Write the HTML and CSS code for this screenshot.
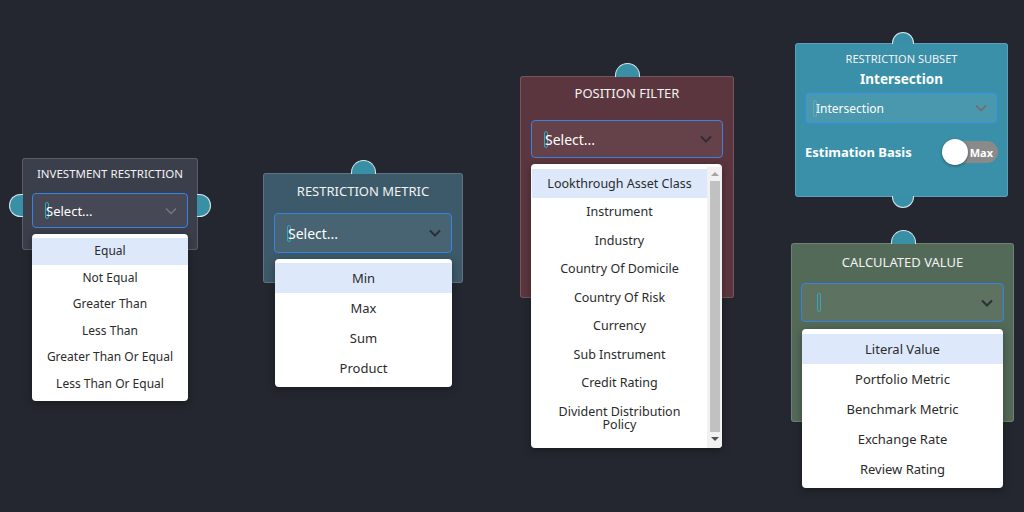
FILE: index.html
```html
<!DOCTYPE html>
<html>
  <head>
    <meta charset="UTF-8">
    <meta name="viewport" content="width=device-width, initial-scale=1.0">
    <title>Restriction builder</title>
    <link rel="stylesheet" href="styles.css">
  </head>
  <body>
    <div class="canvas">

      <!-- Investment restriction -->
      <div class="node node-investment">
        <span class="handle handle-left"></span>
        <span class="handle handle-right"></span>
        <div class="node-title">INVESTMENT RESTRICTION</div>
        <div class="select">
          <span class="caret"></span><span class="select-value">Select...</span>
          <svg class="chevron" viewBox="0 0 12 8"><path d="M1 1.5 6 6.5 11 1.5"/></svg>
          <ul class="menu">
            <li class="active">Equal</li>
            <li>Not Equal</li>
            <li>Greater Than</li>
            <li>Less Than</li>
            <li>Greater Than Or Equal</li>
            <li>Less Than Or Equal</li>
          </ul>
        </div>
      </div>

      <!-- Restriction metric -->
      <div class="node node-metric">
        <span class="handle handle-top"></span>
        <div class="node-title">RESTRICTION METRIC</div>
        <div class="select">
          <span class="caret"></span><span class="select-value">Select...</span>
          <svg class="chevron" viewBox="0 0 12 8"><path d="M1 1.5 6 6.5 11 1.5"/></svg>
          <ul class="menu">
            <li class="active">Min</li>
            <li>Max</li>
            <li>Sum</li>
            <li>Product</li>
          </ul>
        </div>
      </div>

      <!-- Position filter -->
      <div class="node node-filter">
        <span class="handle handle-top"></span>
        <div class="node-title">POSITION FILTER</div>
        <div class="select">
          <span class="caret"></span><span class="select-value">Select...</span>
          <svg class="chevron" viewBox="0 0 12 8"><path d="M1 1.5 6 6.5 11 1.5"/></svg>
          <div class="menu menu-scroll">
            <ul class="menu-list">
              <li class="active">Lookthrough Asset Class</li>
              <li>Instrument</li>
              <li>Industry</li>
              <li>Country Of Domicile</li>
              <li>Country Of Risk</li>
              <li>Currency</li>
              <li>Sub Instrument</li>
              <li>Credit Rating</li>
              <li>Divident Distribution Policy</li>
              <li>Ark Restriction</li>
            </ul>
            <div class="scrollbar">
              <span class="arrow arrow-up"></span>
              <span class="thumb"></span>
              <span class="arrow arrow-down"></span>
            </div>
          </div>
        </div>
      </div>

      <!-- Restriction subset -->
      <div class="node node-subset">
        <span class="handle handle-top"></span>
        <span class="handle handle-bottom"></span>
        <div class="node-title small">RESTRICTION SUBSET</div>
        <div class="node-subtitle">Intersection</div>
        <div class="select">
          <span class="caret faint"></span><span class="select-value">Intersection</span>
          <svg class="chevron" viewBox="0 0 12 8"><path d="M1 1.5 6 6.5 11 1.5"/></svg>
        </div>
        <div class="field-row">
          <span class="field-label">Estimation Basis</span>
          <span class="toggle"><span class="knob"></span><span class="toggle-text">Max</span></span>
        </div>
      </div>

      <!-- Calculated value -->
      <div class="node node-value">
        <span class="handle handle-top"></span>
        <div class="node-title">CALCULATED VALUE</div>
        <div class="select">
          <span class="caret"></span><span class="select-value"></span>
          <svg class="chevron" viewBox="0 0 12 8"><path d="M1 1.5 6 6.5 11 1.5"/></svg>
          <ul class="menu">
            <li class="active">Literal Value</li>
            <li>Portfolio Metric</li>
            <li>Benchmark Metric</li>
            <li>Exchange Rate</li>
            <li>Review Rating</li>
          </ul>
        </div>
      </div>

    </div>
  </body>
</html>
```

FILE: styles.css
```css
html, body {
  margin: 0;
  height: 100%;
}
body {
  background: #24272f;
  font-family: "Noto Sans", "Open Sans", sans-serif;
  color: #fff;
  overflow: hidden;
}
.canvas {
  position: relative;
  width: 1024px;
  height: 512px;
}

/* nodes sit on a free canvas */
.node {
  position: absolute;
  box-sizing: border-box;
  display: flex;
  flex-direction: column;
  border: 1px solid rgba(255, 255, 255, 0.16);
  border-radius: 3px;
}
.node-investment {
  left: 22px;
  top: 158px;
  width: 176px;
  height: 92px;
  padding: 0 9px;
  background: #3b3e4b;
}
.node-metric {
  left: 263px;
  top: 173px;
  width: 200px;
  height: 110px;
  padding: 0 10px;
  background: #3d5a6a;
}
.node-filter {
  left: 520px;
  top: 76px;
  width: 214px;
  height: 222px;
  padding: 0 10px;
  background: #5c363e;
}
.node-subset {
  left: 795px;
  top: 43px;
  width: 213px;
  height: 154px;
  padding: 0 9px;
  background: #3a90a8;
}
.node-value {
  left: 791px;
  top: 243px;
  width: 223px;
  height: 179px;
  padding: 0 9px;
  background: #546a59;
}

.node-title {
  text-align: center;
  font-size: 13px;
  line-height: 18px;
  margin: 8px 0 13px;
  color: #f2f2f2;
}
.node-investment .node-title {
  font-size: 11.5px;
  margin: 6px 0 10px;
}
.node-filter .node-title {
  margin: 7px 0 18px;
}
.node-value .node-title {
  margin: 9px 0 12px;
}
.node-title.small {
  font-size: 11px;
  line-height: 14px;
  margin: 8px 0 4px;
}
.node-subtitle {
  text-align: center;
  font-size: 13.5px;
  font-weight: bold;
  line-height: 18px;
  margin-bottom: 4px;
}

/* connection handles */
.handle {
  position: absolute;
  box-sizing: border-box;
  background: #3990a6;
  border: 1px solid #d7e6ea;
}
.handle-top {
  left: 50%;
  top: -14px;
  width: 25px;
  height: 14px;
  margin-left: -12px;
  border-bottom: none;
  border-radius: 13px 13px 0 0;
}
.node-subset .handle-top {
  top: -12px;
  width: 22px;
  height: 12px;
  margin-left: -10px;
}
.handle-bottom {
  left: 50%;
  bottom: -12px;
  width: 22px;
  height: 12px;
  margin-left: -10px;
  border-top: none;
  border-radius: 0 0 12px 12px;
}
.handle-left {
  left: -14px;
  top: 35px;
  width: 14px;
  height: 23px;
  border-right: none;
  border-radius: 12px 0 0 12px;
}
.handle-right {
  right: -14px;
  top: 35px;
  width: 14px;
  height: 23px;
  border-left: none;
  border-radius: 0 12px 12px 0;
}

/* select boxes */
.select {
  position: relative;
  box-sizing: border-box;
  display: flex;
  align-items: center;
  height: 40px;
  padding: 0 10px 0 12px;
  border: 1px solid #3584e4;
  border-radius: 4px;
  background: rgba(255, 255, 255, 0.06);
  font-size: 14px;
}
.node-investment .select {
  height: 35px;
  font-size: 13px;
}
.node-filter .select {
  height: 38px;
}
.node-value .select {
  height: 39px;
}
.node-subset .select {
  height: 32px;
  padding-left: 7px;
  font-size: 12px;
  border-color: #2e8ce6;
  background: rgba(255, 255, 255, 0.08);
}
.caret {
  box-sizing: border-box;
  width: 4px;
  height: 17px;
  margin-right: -3px;
  border: 1px solid #35a7ba;
  border-radius: 2px;
}
.caret.faint {
  border-color: rgba(255, 255, 255, 0.15);
  margin-right: -1px;
}
.node-value .caret {
  margin-left: 3px;
  height: 19px;
}
.select-value {
  flex: 1;
}
.chevron {
  width: 12px;
  height: 8px;
  fill: none;
  stroke: #2c2f36;
  stroke-width: 2;
}
.node-investment .chevron {
  stroke: #747784;
  stroke-width: 1.5;
}
.node-subset .chevron {
  stroke: #7d6565;
  stroke-width: 1.5;
}

/* dropdown menus */
.menu {
  position: absolute;
  left: -1px;
  right: -1px;
  top: 100%;
  margin: 6px 0 0;
  padding: 4px 0;
  list-style: none;
  background: #fff;
  border-radius: 4px;
  box-shadow: 0 2px 8px rgba(0, 0, 0, 0.35);
  color: #2b2b2b;
  font-size: 13px;
  text-align: center;
  z-index: 2;
}
.menu li {
  line-height: 18px;
  padding: 6px 8px;
}
.menu li.active {
  background: #dde9fb;
}
.node-investment .menu {
  font-size: 12px;
  margin-top: 7px;
}
.node-investment .menu li {
  line-height: 16px;
  padding: 5px 8px 5.5px;
}
.node-metric .menu {
  left: 0;
  margin-top: 7px;
  padding-top: 4px;
}
.node-value .menu {
  left: 0;
  right: 0;
  margin-top: 8px;
  padding-top: 5px;
}
.menu-scroll {
  display: flex;
  height: 284px;
  margin-top: 7px;
  padding: 0;
  overflow: hidden;
  right: 0;
}
.menu-list {
  flex: 1;
  margin: 0;
  padding: 5px 0 0 1px;
  list-style: none;
  font-size: 12.5px;
}
.menu-scroll li {
  line-height: 13.5px;
  padding: 7.5px 10px;
}
.scrollbar {
  display: flex;
  flex-direction: column;
  align-items: center;
  width: 15px;
  margin-top: 3px;
  background: #f1f1f1;
}
.thumb {
  flex: 1;
  width: 10px;
  background: #c1c1c1;
}
.arrow {
  width: 0;
  height: 0;
  margin: 5px 0;
  border-left: 4px solid transparent;
  border-right: 4px solid transparent;
}
.arrow-up {
  border-bottom: 4px solid #a3a3a3;
}
.arrow-down {
  border-top: 4px solid #505050;
  margin-bottom: 7px;
}

/* estimation basis row */
.field-row {
  display: flex;
  align-items: center;
  justify-content: space-between;
  margin-top: 17px;
}
.field-label {
  font-size: 13px;
  font-weight: bold;
}
.toggle {
  position: relative;
  display: flex;
  align-items: center;
  justify-content: flex-end;
  box-sizing: border-box;
  width: 51px;
  height: 22px;
  padding-right: 5px;
  border-radius: 11px;
  background: #8a8a8a;
}
.knob {
  position: absolute;
  left: -5px;
  top: -2px;
  width: 26px;
  height: 26px;
  border-radius: 50%;
  background: #fff;
  box-shadow: 0 1px 3px rgba(0, 0, 0, 0.4);
}
.toggle-text {
  font-size: 11px;
  font-weight: bold;
}
```
